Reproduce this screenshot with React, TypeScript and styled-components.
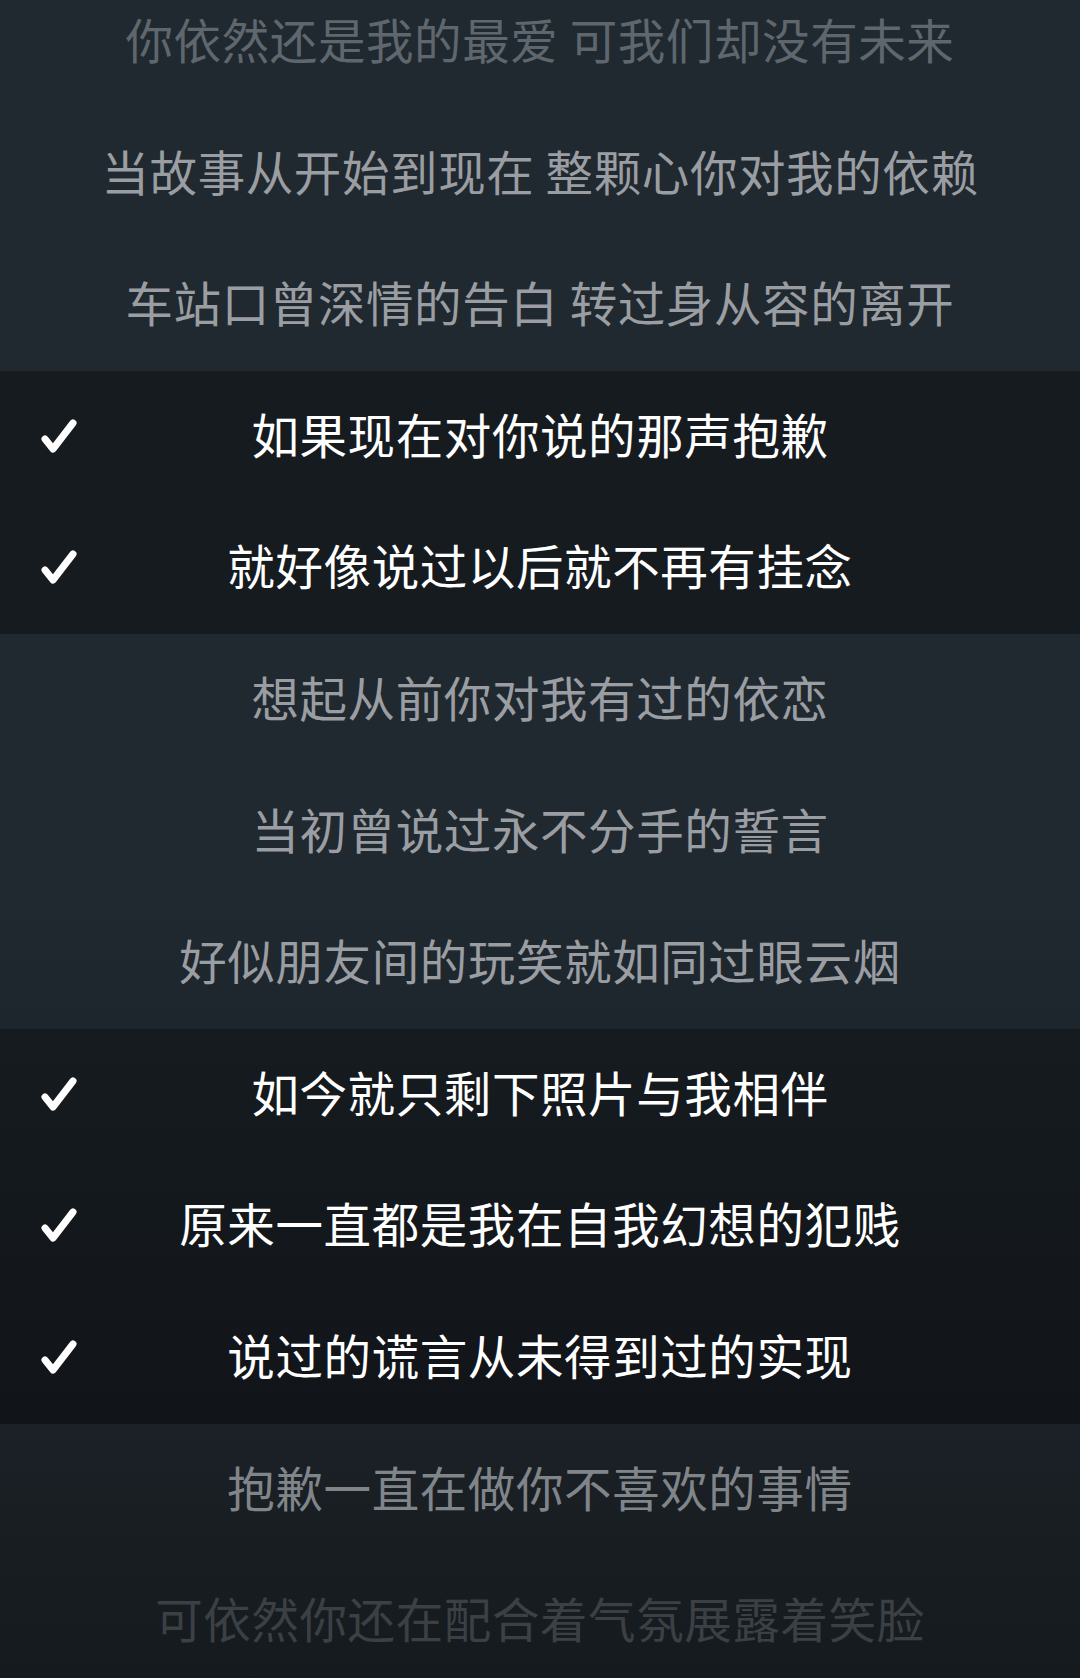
import styled, { createGlobalStyle } from "styled-components";

const GlobalStyle = createGlobalStyle`
  html, body {
    margin: 0;
    padding: 0;
    background: #212930;
  }
`;

type Line = { text: string; picked: boolean; bg?: string; ink?: string };

const lines: Line[] = [
  { text: "你依然还是我的最爱 可我们却没有未来", picked: false, ink: "#5f676e" },
  { text: "当故事从开始到现在 整颗心你对我的依赖", picked: false },
  { text: "车站口曾深情的告白 转过身从容的离开", picked: false },
  { text: "如果现在对你说的那声抱歉", picked: true },
  { text: "就好像说过以后就不再有挂念", picked: true },
  { text: "想起从前你对我有过的依恋", picked: false },
  { text: "当初曾说过永不分手的誓言", picked: false },
  { text: "好似朋友间的玩笑就如同过眼云烟", picked: false, bg: "linear-gradient(#212930, #1e262d)" },
  { text: "如今就只剩下照片与我相伴", picked: true, bg: "linear-gradient(#161b20, #14191d)" },
  { text: "原来一直都是我在自我幻想的犯贱", picked: true, bg: "linear-gradient(#14191d, #13171b)" },
  { text: "说过的谎言从未得到过的实现", picked: true, bg: "linear-gradient(#13171b, #11151a)" },
  {
    text: "抱歉一直在做你不喜欢的事情",
    picked: false,
    bg: "linear-gradient(#1b2126, #181d22)",
    ink: "#80858a",
  },
  {
    text: "可依然你还在配合着气氛展露着笑脸",
    picked: false,
    bg: "linear-gradient(#181d22, #151a1e)",
    ink: "#3b4045",
  },
];

const Check = () => (
  <svg width="40" height="40" viewBox="0 0 40 40">
    <path
      d="M6 22 L14 32 L34 6"
      fill="none"
      stroke="#ffffff"
      strokeWidth="7"
      strokeLinecap="round"
      strokeLinejoin="round"
    />
  </svg>
);

const App = () => {
  return (
    <Screen>
      <GlobalStyle />
      <List>
        {lines.map((l, i) => (
          <Row key={i} $bg={l.bg ?? (l.picked ? "#161b20" : "#212930")}>
            <Tick>{l.picked && <Check />}</Tick>
            <Lyric $ink={l.ink ?? (l.picked ? "#ffffff" : "#9a9ea3")}>{l.text}</Lyric>
          </Row>
        ))}
      </List>
    </Screen>
  );
};

export default App;

const Screen = styled.div`
  width: 1080px;
  height: 1678px;
  overflow: hidden;
  background: #151a1e;
  font-family: "Noto Sans CJK SC", "Noto Sans", sans-serif;
`;

const List = styled.div`
  display: flex;
  flex-direction: column;
  margin-top: -24px;
`;

const Row = styled.div<{ $bg: string }>`
  position: relative;
  height: 131.6px;
  flex-shrink: 0;
  display: flex;
  align-items: center;
  justify-content: center;
  padding-bottom: 6px;
  box-sizing: border-box;
  background: ${(p) => p.$bg};
`;

const Tick = styled.div`
  position: absolute;
  left: 39px;
  top: 50%;
  transform: translateY(-50%);
  width: 40px;
  height: 40px;
`;

const Lyric = styled.div<{ $ink: string }>`
  font-size: 47.5px;
  line-height: 1;
  letter-spacing: 0.6px;
  color: ${(p) => p.$ink};
  white-space: nowrap;
`;
